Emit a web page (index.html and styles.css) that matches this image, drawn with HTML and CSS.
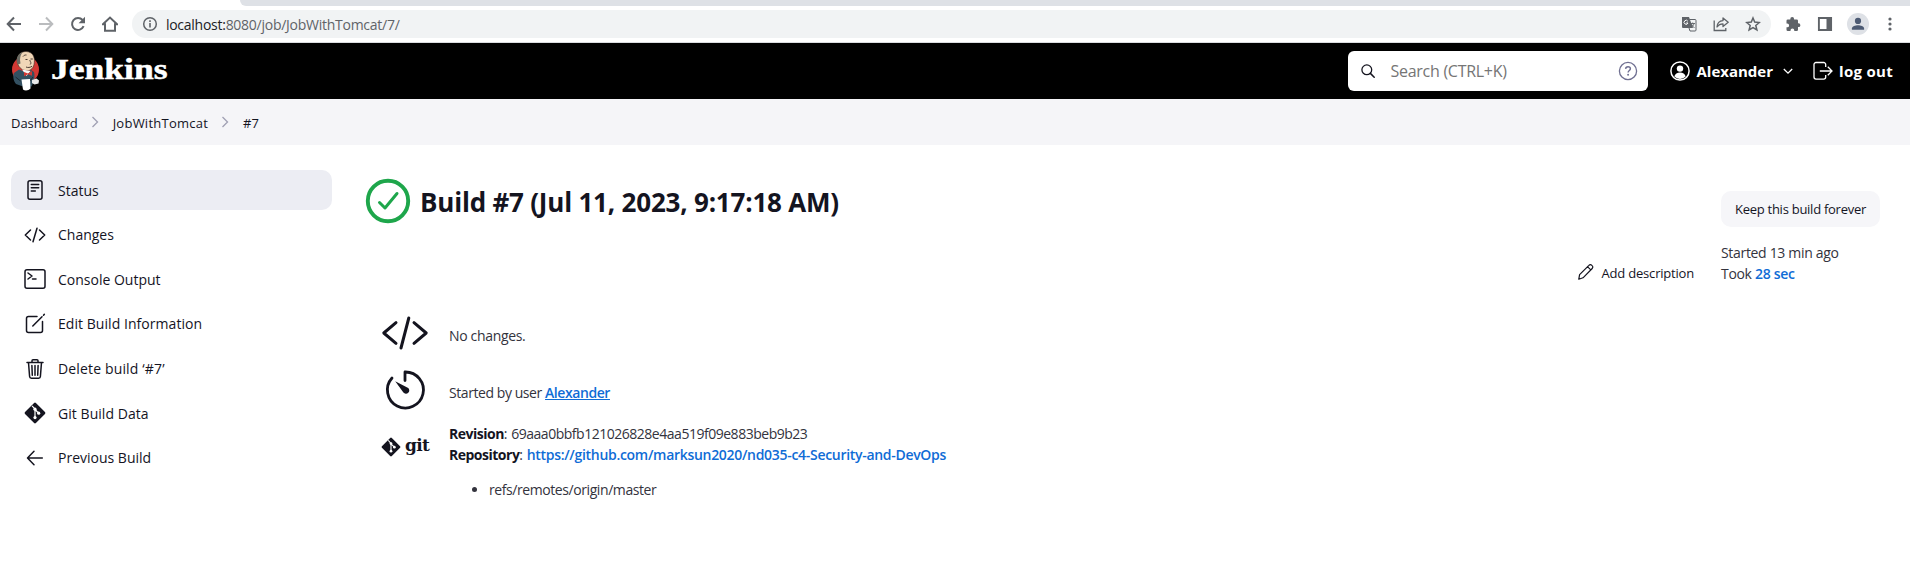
FILE: index.html
```html
<!DOCTYPE html>
<html lang="en">
<head>
<meta charset="utf-8">
<title>JobWithTomcat #7 [Jenkins]</title>
<link rel="stylesheet" href="styles.css">
</head>
<body>
<div class="tabstrip"><div class="tabstrip-rest"></div></div>
<div class="toolbar">
  <div class="nav">
    <svg width="16" height="16" viewBox="0 0 16 16"><path d="M15 8H2M8 1.5 1.7 8 8 14.5" class="b2"/></svg>
    <svg width="16" height="16" viewBox="0 0 16 16"><path d="M1 8h13M8 1.5 14.3 8 8 14.5" class="b2 dim"/></svg>
    <svg width="16" height="16" viewBox="0 0 16 16"><path d="M13.6 10.2A6 6 0 1 1 12.6 4" class="b2"/><path d="M15 .8v6.4H8.6z" fill="#5f6368"/></svg>
    <svg width="16" height="16" viewBox="0 0 16 16"><path d="M.9 8.2 8 1.6l7.1 6.6H13v6.6H3V8.2z" class="b2"/></svg>
  </div>
  <div class="omnibox">
    <svg width="16" height="16" viewBox="0 0 16 16"><circle cx="8" cy="8" r="6.3" fill="none" stroke="#5f6368" stroke-width="1.5"/><path d="M7.2 7h1.6v4.600H7.2zM7.2 4.300h1.600v1.600H7.200z" fill="#5f6368"/></svg>
    <div class="url"><span class="host">localhost:</span>8080/job/JobWithTomcat/7/</div>
    <div class="omni-actions">
      <svg width="16" height="16" viewBox="0 0 16 16"><path d="M1 1h7l4 11H2a1 1 0 0 1-1-1z" fill="#5f6368"/><path d="M8.5 3.5H14a1 1 0 0 1 1 1V14a1 1 0 0 1-1 1H9l-1-3" fill="none" stroke="#5f6368"/><path d="M6.8 5.2A2 2 0 1 0 7 7H5.2" fill="none" stroke="#fff"/><path d="M9.5 7.5H14M11.7 6.5v1M13 7.5c-.5 2-1.500 3-3 4M10.500 8c.5 1.500 1.500 2.500 3 4" fill="none" stroke="#5f6368" stroke-width=".9"/></svg>
      <svg width="16" height="16" viewBox="0 0 16 16"><path d="M1.200 4.500V14.500H12.800V12" fill="none" stroke="#5f6368" stroke-width="1.300"/><path d="M4 11c.3-4 2.500-6.200 6-6.400V1.900L15.200 6.300 10 10.500V7.900C7.500 7.900 5.500 8.800 4 11z" fill="none" stroke="#5f6368" stroke-width="1.300" stroke-linejoin="round"/></svg>
      <svg width="16" height="16" viewBox="0 0 16 16"><path d="M8 2 9.700 6.100l4.600.4-3.500 3 1.100 4.500L8 11.600l-3.900 2.400 1.100-4.500-3.500-3 4.600-.4z" fill="none" stroke="#5f6368" stroke-width="1.500"/></svg>
    </div>
  </div>
  <div class="ext">
    <svg width="16" height="16" viewBox="0 0 16 16"><path d="M1.500 4.800q0-1.300 1.300-1.300H5.300V2.900a1.900 1.900 0 0 1 3.800 0v.6h2.600q1.300 0 1.300 1.300v2.500h.5a1.900 1.900 0 0 1 0 3.800H13v2.700q0 1.300-1.300 1.300H9.300v-.7a1.900 1.900 0 0 0-3.800 0v.7H2.800q-1.300 0-1.300-1.300v-2.500h.7a1.900 1.900 0 0 0 0-3.800h-.7z" fill="#5f6368"/></svg>
    <svg width="16" height="16" viewBox="0 0 16 16"><path d="M1.900 2h12.200v12H1.900z" fill="none" stroke="#5f6368" stroke-width="1.900"/><path d="M9.500 2H15v12H9.500z" fill="#5f6368"/></svg>
    <svg class="avatar" width="22" height="22" viewBox="0 0 22 22"><circle cx="11" cy="11" r="11" fill="#dee1e6"/><circle cx="11" cy="7.900" r="3.100" fill="#4c5a73"/><path d="M4.900 16.800v-1.400c0-2.200 3.600-3.200 6.100-3.200s6.100 1 6.100 3.200v1.400z" fill="#4c5a73"/></svg>
    <svg width="16" height="16" viewBox="0 0 16 16"><g fill="#5f6368"><circle cx="8" cy="3" r="1.600"/><circle cx="8" cy="8" r="1.600"/><circle cx="8" cy="13" r="1.600"/></g></svg>
  </div>
</div>

<header class="header">
  <a class="brand">
    <svg width="30" height="42" viewBox="0 0 30 42">
      <circle cx="15.500" cy="19.500" r="13.500" fill="#d33833"/>
      <path d="M7.500 13C6 5 11 1.500 16 1.500c6.500.3 9 5 8.300 11C24 18 20.500 20.800 17 20.800c-4 0-8.500-3-9.500-7.800z" fill="#f0d6b7" stroke="#3a2b25" stroke-width=".6"/>
      <path d="M8 14.500C5.500 11 6.500 4.500 12.500 2.300c-1.800 2.500-2.300 4.500-2.500 7.500L10.500 13.500z" fill="#6b6b63"/>
      <path d="M15.500 9.500h2M20.500 9h2.300M19.800 10c.5 2.500 2.500 3.500 0 4.200M16 17c2 .8 4 .6 6-.7M13 6.500c1-1.200 2-1.600 3.500-1.500" fill="none" stroke="#3a2b25" stroke-width=".9"/>
      <path d="M9 19.500 4 23c-1.500 3-.5 8 2 11l7 2.500h8.500c3-5 3.500-11 2.500-14.500l-3-2-4 2.500z" fill="#335061"/>
      <path d="M12 19.500l4.500 6.500 4-5z" fill="#f7f7f7"/>
      <path d="M14 22l4 1.500 4-2.500v4.800l-4-1.500-4 2z" fill="#d33833"/>
      <path d="M5.500 27l5 4M23 27l-3 4" stroke="#1d2a33" fill="none"/>
      <path d="M11.500 29.500l8.500-.500.5 9.500c-2 2.200-5.500 2.500-7.500 1z" fill="#fff"/>
      <path d="M22 30l4.500-1.500 2.500 2-.5 3-4 1-2.500-1.500z" fill="#e9e9e9"/>
    </svg>
    <span class="wordmark">Jenkins</span>
  </a>
  <div class="search">
    <svg width="16" height="16" viewBox="0 0 16 16"><circle cx="6.800" cy="6.800" r="4.900" fill="none" stroke="#14141f" stroke-width="1.300"/><path d="M10.400 10.400 14.200 14.200" stroke="#14141f" stroke-width="1.500" stroke-linecap="round"/></svg>
    <span class="placeholder">Search (CTRL+K)</span>
    <svg width="20" height="20" viewBox="0 0 20 20"><circle cx="10" cy="10" r="8.600" fill="none" stroke="#6f6f91" stroke-width="1.300"/><path d="M7.600 7.900c.1-1.500 1.200-2.200 2.400-2.200 1.400 0 2.400.8 2.400 2 0 1.800-2.300 1.700-2.300 3.800" fill="none" stroke="#6f6f91" stroke-width="1.400"/><circle cx="10.100" cy="13.700" r=".95" fill="#6f6f91"/></svg>
  </div>
  <a class="user">
    <svg width="20" height="20" viewBox="0 0 20 20"><circle cx="10" cy="10" r="9.100" fill="none" stroke="#fff" stroke-width="1.500"/><circle cx="10" cy="7.600" r="3.200" fill="#fff"/><path d="M4.300 15.400c.7-2.500 3-3.800 5.700-3.800s5 1.300 5.700 3.800A8 8 0 0 1 10 17.900a8 8 0 0 1-5.700-2.500z" fill="#fff"/></svg>
    <span>Alexander</span>
    <svg class="caret" width="10" height="10" viewBox="0 0 10 10"><path d="M.8 3 5 7.200 9.200 3" fill="none" stroke="#fff" stroke-width="1.300"/></svg>
  </a>
  <a class="logout">
    <svg width="20" height="20" viewBox="0 0 20 20"><path d="M12.700 6V3.500a2 2 0 0 0-2-2H3a2 2 0 0 0-2 2v12.600a2 2 0 0 0 2 2h7.700a2 2 0 0 0 2-2V14M6.800 10H18.500M14.800 5.800 19 10l-4.200 4.200" fill="none" stroke="#fff" stroke-width="1.300"/></svg>
    <span>log out</span>
  </a>
</header>

<nav class="crumbs">
  <a>Dashboard</a>
  <svg width="8" height="12" viewBox="0 0 8 12"><path d="M1.500 1 6.500 6l-5 5" class="sep"/></svg>
  <a class="job">JobWithTomcat</a>
  <svg width="8" height="12" viewBox="0 0 8 12"><path d="M1.500 1 6.500 6l-5 5" class="sep"/></svg>
  <a>#7</a>
</nav>

<div class="page">
  <aside class="tasks">
    <a class="task active"><svg width="24" height="24" viewBox="0 0 24 24"><rect x="5" y="2.800" width="14" height="18.400" rx="2" class="i15"/><path d="M8.300 6.500h7.400M8.300 9.700h7.400M8.300 12.900h4" class="i15"/></svg><span>Status</span></a>
    <a class="task"><svg width="24" height="24" viewBox="0 0 24 24"><path d="M7.500 7 2.300 12l5.200 5M16.500 7l5.200 5-5.200 5M14 5.300 10 18.700" class="i15"/></svg><span>Changes</span></a>
    <a class="task"><svg width="24" height="24" viewBox="0 0 24 24"><rect x="2" y="2.700" width="20" height="18.600" rx="2" class="i15"/><path d="M5 6l4 3-4 3M9.500 12h3.500" class="i15"/></svg><span>Console Output</span></a>
    <a class="task"><svg width="24" height="24" viewBox="0 0 24 24"><path d="M14 4.500H5.500a2 2 0 0 0-2 2v12a2 2 0 0 0 2 2h12a2 2 0 0 0 2-2V9.500M9.800 14 19 4.700M20.500 3.200l.8-.8" class="i15"/></svg><span class="wide">Edit Build Information</span></a>
    <a class="task"><svg width="24" height="24" viewBox="0 0 24 24"><path d="M4 5.500h16M5.500 5.500l1.100 14a1.800 1.800 0 0 0 1.800 1.700h7.200a1.800 1.800 0 0 0 1.800-1.700l1.100-14M9 5.500V3.700a1 1 0 0 1 1-1h4a1 1 0 0 1 1 1v1.800M12 8.500v9.700M8.900 8.500l.4 9.700M15.100 8.500l-.4 9.700" class="i15"/></svg><span class="wider">Delete build ‘#7’</span></a>
    <a class="task"><svg width="24" height="24" viewBox="0 0 24 24"><rect x="4.300" y="4.300" width="15.400" height="15.400" rx="1.300" transform="rotate(45 12 12)" fill="#14141f"/><path d="M9 4.800 12 8v9M12 8.500l4 4" fill="none" stroke="#fff" stroke-width="1.200"/><g fill="#fff"><circle cx="12" cy="8.200" r="1.600"/><circle cx="12" cy="16.600" r="1.600"/><circle cx="15.700" cy="12.200" r="1.600"/></g></svg><span class="wide">Git Build Data</span></a>
    <a class="task"><svg width="24" height="24" viewBox="0 0 24 24"><path d="M11 5.300 4.500 12l6.500 6.700M5 12h14.300" class="i15"/></svg><span>Previous Build</span></a>
  </aside>

  <main class="main">
    <div class="top">
      <div class="title">
        <svg width="46" height="46" viewBox="0 0 46 46"><circle cx="23" cy="23" r="20.200" fill="none" stroke="#1ea64b" stroke-width="3.900"/><path d="M14.500 24.500 20 30 32 15.500" fill="none" stroke="#1ea64b" stroke-width="3" stroke-linecap="round" stroke-linejoin="round"/></svg>
        <h1>Build #7 (Jul 11, 2023, 9:17:18 AM)</h1>
      </div>
      <a class="add-desc">
        <svg width="18" height="18" viewBox="0 0 18 18"><path d="M2.600 11.600 11.900 2.300a2 2 0 0 1 2.900 0l.4.400a2 2 0 0 1 0 2.800L6 14.800l-4.200 1.400zM10.700 3.800 13.800 6.900" fill="none" stroke="#14141f" stroke-width="1.200" stroke-linejoin="round"/></svg>
        <span>Add description</span>
      </a>
      <div class="info">
        <button class="keep">Keep this build forever</button>
        <div class="started">Started 13 min ago</div>
        <div class="took">Took <a class="link">28 sec</a></div>
      </div>
    </div>

    <div class="rows">
      <div class="row r1">
        <svg width="48" height="48" viewBox="0 0 24 24"><path d="M7.500 6.800 1.400 12l6.100 5.200M16.500 6.800l6.100 5.200-6.100 5.200M13.900 4.500 10 19.500" class="i15"/></svg>
        <p>No changes.</p>
      </div>
      <div class="row r2">
        <svg width="48" height="48" viewBox="0 0 48 48"><path d="M24 14.500V6A18 18 0 1 1 11 12" fill="none" stroke="#14141f" stroke-width="2.800" stroke-linecap="round" stroke-linejoin="round"/><path d="M14.200 15.200 27.200 22a3.300 3.300 0 1 1-4.800 4.500z" fill="#14141f"/></svg>
        <p>Started by user <a class="link underlined">Alexander</a></p>
      </div>
      <div class="row">
        <div class="gitlogo">
          <svg width="20" height="20" viewBox="1 1 22 22"><rect x="4.300" y="4.300" width="15.400" height="15.400" rx="1.300" transform="rotate(45 12 12)" fill="#14141f"/><path d="M9 4.800 12 8v9M12 8.500l4 4" fill="none" stroke="#fff" stroke-width="1.200"/><g fill="#fff"><circle cx="12" cy="8.200" r="1.500"/><circle cx="12" cy="16.600" r="1.500"/><circle cx="15.700" cy="12.200" r="1.500"/></g></svg>
          <span>git</span>
        </div>
        <div class="rev">
          <div><b>Revision</b>: <span class="hash">69aaa0bbfb121026828e4aa519f09e883beb9b23</span></div>
          <div><b>Repository</b>: <a class="link repo">https://github.com/marksun2020/nd035-c4-Security-and-DevOps</a></div>
          <ul><li>refs/remotes/origin/master</li></ul>
        </div>
      </div>
    </div>
  </main>
</div>
</body>
</html>
```

FILE: styles.css
```css
* { box-sizing: border-box; }
body {
  margin: 0;
  height: 586px;
  overflow: hidden;
  background: #fff;
  color: #14141f;
  font: 400 14px/21px "Open Sans", "Noto Sans", sans-serif;
}
svg { display: block; flex: none; }
.b2 { fill: none; stroke: #5f6368; stroke-width: 2; }
.dim { stroke: #babcbe; }
.i15 { fill: none; stroke: #14141f; stroke-width: 1.5; stroke-linecap: round; stroke-linejoin: round; }

.tabstrip { height: 6px; padding-left: 240px; }
.tabstrip-rest { height: 6px; background: #dee1e6; border-bottom-left-radius: 7px; }
.toolbar {
  display: flex;
  height: 37px;
  padding: 4px 12px 4px 6px;
  border-bottom: 1px solid #dadce0;
}
.nav { display: flex; align-items: center; gap: 16px; width: 126px; }
.omnibox {
  display: flex;
  align-items: center;
  width: 1640px;
  height: 28px;
  padding: 0 10px;
  border-radius: 14px;
  background: #f1f3f4;
}
.url { flex: 1; margin-left: 8px; color: #5f6368; white-space: nowrap; letter-spacing: -.26px; }
.host { color: #202124; }
.omni-actions { display: flex; gap: 16px; }
.ext { display: flex; align-items: center; gap: 16.5px; margin-left: 14px; }
.avatar { margin: 0 -3px; }

.header {
  display: flex;
  align-items: center;
  height: 56px;
  padding: 0 17px 0 10px;
  background: #000;
  color: #fff;
  font-weight: 700;
  font-size: 15px;
}
.brand { display: flex; align-items: center; gap: 11px; margin-right: auto; }
.wordmark {
  margin-top: -4px;
  font: 700 30px/40px "Liberation Serif", serif;
  -webkit-text-stroke: .5px #fff;
  transform: scaleX(1.185);
  transform-origin: left;
}
.search {
  display: flex;
  align-items: center;
  width: 300px;
  height: 40px;
  padding: 0 10px 0 12px;
  border-radius: 6px;
  background: #fff;
}
.placeholder { flex: 1; margin-left: 14px; color: #757575; font-size: 16px; font-weight: 400; letter-spacing: -.27px; }
.user { display: flex; align-items: center; gap: 6px; margin-left: 22px; }
.caret { margin-left: 4px; }
.logout { display: flex; align-items: center; gap: 6px; margin-left: 20px; letter-spacing: .3px; }

.crumbs {
  display: flex;
  align-items: center;
  height: 46px;
  padding: 1px 11px 0;
  background: #f5f5f8;
  font-size: 13px;
}
.crumbs a { padding-top: 1px; letter-spacing: -.05px; }
.crumbs svg { margin: -2px 14px 0 13px; }
.crumbs .job { letter-spacing: .24px; }
.sep { fill: none; stroke: #a0a0b4; stroke-width: 1.3; }

.page { display: flex; padding-top: 25px; }
.tasks { display: flex; flex-direction: column; gap: 4.65px; width: 332px; padding-left: 11px; font-weight: 500; }
.task { display: flex; align-items: center; gap: 11px; height: 40px; padding-left: 12px; border-radius: 10px; }
.wide { letter-spacing: .05px; }
.wider { letter-spacing: .15px; }
.active { background: #ecedf3; }

.main { flex: 1; padding-left: 33px; }
.top { display: flex; height: 115px; }
.title { display: flex; align-items: center; gap: 9px; height: 46px; margin-top: 8px; margin-right: auto; }
h1 { margin: 0; padding-top: 1px; font-size: 26px; line-height: 36px; font-weight: 700; letter-spacing: -.2px; white-space: nowrap; }
.add-desc {
  display: flex;
  align-items: center;
  gap: 7px;
  height: 21px;
  margin: 93px 27px 0 0;
  font-size: 13px;
  font-weight: 500;
  letter-spacing: -.2px;
}
.add-desc svg { margin-top: -4px; }
.info { width: 189px; padding-top: 21px; letter-spacing: -.32px; }
.keep {
  display: block;
  width: 159px;
  height: 36px;
  margin-bottom: 15px;
  padding: 0;
  border: 0;
  border-radius: 10px;
  background: #f6f6f9;
  color: #14141f;
  font: 500 13px/20px "Open Sans", sans-serif;
  letter-spacing: -.26px;
}
.started, .took { white-space: nowrap; color: #33333d; }
.link { color: #0f6cd6; font-weight: 600; }
.underlined { text-decoration: underline; }

.rows { padding: 24px 0 0 16px; }
.row { display: flex; gap: 20px; }
.row p { margin: 0; padding-top: 16px; color: #33333d; letter-spacing: -.43px; }
.r1 { height: 57px; }
.r1 p { letter-spacing: -.34px; }
.r2 { height: 56px; }
.gitlogo { display: flex; align-items: center; gap: 4px; width: 48px; height: 48px; padding-top: 2px; }
.gitlogo span { margin-top: -4px; font: 700 17px/24px "DejaVu Serif", serif; letter-spacing: -.7px; }
.rev { padding-top: 1px; color: #33333d; white-space: nowrap; }
.rev b { color: #14141f; letter-spacing: -.5px; }
.hash { letter-spacing: -.48px; }
.repo { letter-spacing: -.3px; }
ul { margin: 14px 0 0; padding-left: 40px; letter-spacing: -.42px; }
```
